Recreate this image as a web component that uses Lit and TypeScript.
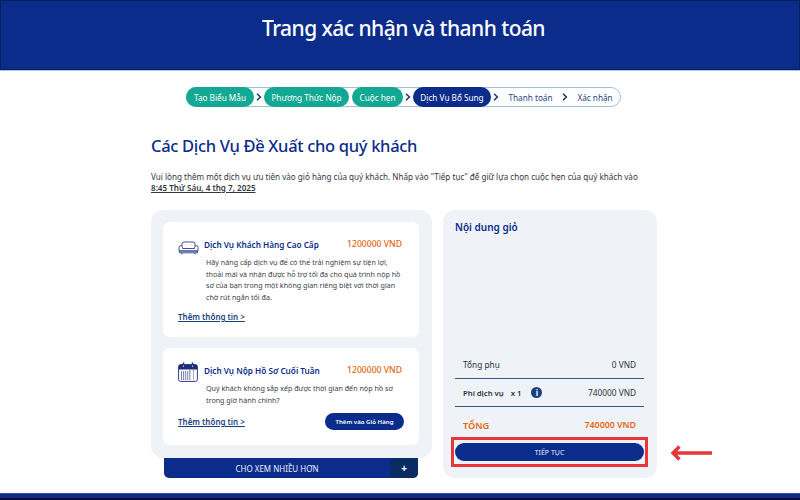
import { LitElement, html, css } from "lit";
import { customElement } from "lit/decorators.js";

const sofa = html`<svg class="sofa" width="21" height="14" viewBox="0 0 21 14" fill="none" stroke="#2b3c8f" stroke-width=".9">
  <path d="M4 5V3Q4 1 6 1H15Q17 1 17 3V5"/>
  <path d="M1 10V6.5Q1 4.7 2.7 4.7T4.5 6.5V7.5H16.5V6.5Q16.5 4.7 18.3 4.7T20 6.5V10Z" fill="#fff"/>
  <path d="M1.5 10H19.5V11.8H1.5Z"/>
  <path d="M4 11.8V13.4M17 11.8V13.4"/>
  <path d="M7.5 4H8.5M12.5 4H13.5" stroke="#d98a94"/>
</svg>`;

const calendar = html`<svg class="cal" width="20" height="20" viewBox="0 0 20 20" fill="none">
  <rect x=".6" y="2.6" width="18.8" height="16.8" rx="2" fill="#fff" stroke="#2b3c8f" stroke-width="1"/>
  <path d="M.6 7.5V4.6Q.6 2.6 2.6 2.6H17.4Q19.4 2.6 19.4 4.6V7.5Z" fill="#1c2f7c"/>
  <path d="M5.5 .6V4.4M14.5 .6V4.4" stroke="#1c2f7c" stroke-width="1.5"/>
  <path d="M5.5 3.6V4.8M14.5 3.6V4.8" stroke="#fff" stroke-width=".9"/>
  <path d="M3.5 9V18M5.6 9V18M7.7 9V18M9.8 9V18M11.9 9V18" stroke="#66739f" stroke-width=".9"/>
  <path d="M15.5 9V18" stroke="#66739f" stroke-width=".6"/>
  <path d="M11 8.7H12.4M14.8 8.7H16.2" stroke="#d9534f" stroke-width=".9"/>
</svg>`;

@customElement("app-root")
export class AppRoot extends LitElement {
  static styles = css`
    :host {
      display: flex;
      flex-direction: column;
      width: 800px;
      height: 500px;
      overflow: hidden;
      position: relative;
      background: #fff;
      font-family: "Noto Sans", sans-serif;
      color: #2b2f38;
    }
    * { box-sizing: border-box; }
    .top {
      height: 70px;
      margin-bottom: 1px;
      flex: none;
      background: #0b2c8a;
      border: 1px solid #07205f;
      box-shadow: 0 1px 0 #a9c4ea;
      display: flex;
      justify-content: center;
      padding: 13px 0 0 7px;
      color: #fff;
      font-size: 21px;
      font-weight: 500;
      line-height: 28px;
      letter-spacing: -0.56px;
    }
    .steps-row {
      display: flex;
      padding: 16px 0 0 186px;
      height: 47px;
      flex: none;
    }
    .steps {
      width: 435px;
      height: 20px;
      border: 1px solid #9fc0d8;
      border-radius: 10px;
      display: flex;
      align-items: center;
      font-size: 8.2px;
    }
    .pill {
      height: 20px;
      border-radius: 10px;
      display: flex;
      align-items: center;
      justify-content: center;
      color: #fff;
      background: #12a893;
      flex: none;
    }
    .p1 { width: 68px; margin-left: -1px; }
    .p2 { width: 85px; }
    .p3 { width: 51px; margin-left: 3px; }
    .p4 { width: 78px; background: #0b2c8a; }
    .plain { color: #23457e; flex: none; text-align: center; }
    .t1 { width: 59px; }
    .t2 { width: 50px; }
    .chev { width: 10px; flex: none; display: flex; justify-content: center; }
    .main {
      width: 506px;
      margin-left: 151px;
      flex: 1;
      display: flex;
      flex-direction: column;
    }
    h1 {
      margin: 16px 0 0;
      font-size: 16.5px;
      line-height: 24px;
      font-weight: 500;
      color: #0b2c8a;
      letter-spacing: -0.31px;
    }
    .desc {
      margin: 13px 0 0;
      font-size: 8.1px;
      line-height: 11px;
      width: 506px;
      color: #33373f;
    }
    .desc b {
      font-weight: 600;
      text-decoration: underline;
      white-space: nowrap;
    }
    .cols {
      margin-top: 17px;
      display: flex;
      gap: 11px;
      align-items: flex-start;
    }
    .left { width: 281px; flex: none; display: flex; flex-direction: column; }
    .panel {
      width: 281px;
      height: 248px;
      background: #eff3f7;
      border-radius: 12px;
      padding: 12px 13px 12px 12px;
      display: flex;
      flex-direction: column;
      gap: 11px;
    }
    .card {
      background: #fff;
      border-radius: 7px;
      padding: 15px 15px 0;
      display: flex;
      flex-direction: column;
    }
    .c1 { height: 115px; }
    .c2 { height: 97px; }
    .head { display: flex; align-items: center; height: 14px; }
    .ico { width: 26px; flex: none; display: flex; height: 14px; align-items: center; }
    .sofa { margin-top: 7px; }
    .cal { margin-top: 4px; }
    .name { flex: 1; color: #0b2c8a; font-size: 8.2px; font-weight: 600; }
    .price { color: #e4640f; font-size: 8.6px; font-weight: 500; padding-right: 2px; }
    .txt {
      margin: 6px 0 0 28px;
      font-size: 7.15px;
      line-height: 11.6px;
      color: #3c4048;
      width: 197px;
    }
    .foot {
      margin-top: 7px;
      display: flex;
      align-items: center;
      justify-content: space-between;
      min-height: 12px;
    }
    .link {
      color: #17427f;
      font-size: 8px;
      font-weight: 600;
      text-decoration: underline;
    }
    .add {
      width: 79px;
      height: 17px;
      border-radius: 9px;
      background: #0b2c8a;
      color: #fff;
      font-size: 6.1px;
      font-weight: 600;
      display: flex;
      align-items: center;
      justify-content: center;
    }
    .more {
      width: 254px;
      height: 20px;
      margin-left: 13px;
      background: #0b2c8a;
      border-radius: 0 0 5px 5px;
      display: flex;
      overflow: hidden;
      color: #e8eefb;
      font-size: 8px;
    }
    .more span { flex: 1; display: flex; align-items: center; justify-content: center; }
    .more i {
      width: 28px;
      background: #0a2b63;
      font-style: normal;
      font-weight: 700;
      font-size: 10px;
      color: #fff;
      display: flex;
      align-items: center;
      justify-content: center;
    }
    .cart {
      width: 214px;
      height: 268px;
      background: #eff3f7;
      border-radius: 12px;
      padding: 10px 13px 0 12px;
      display: flex;
      flex-direction: column;
    }
    .cart h2 {
      margin: 0;
      font-size: 10px;
      line-height: 15px;
      font-weight: 600;
      color: #0b2c8a;
    }
    .spacer { flex: 1; }
    .line {
      height: 28px;
      display: flex;
      align-items: center;
      justify-content: space-between;
      border-bottom: 1px solid #36577f;
      padding: 0 8px;
      font-size: 8.3px;
      color: #2b3340;
    }
    .line .l { display: flex; align-items: center; }
    .fee .l { font-weight: 600; font-size: 7.7px; }
    .x { margin-left: 7px; }
    .info {
      width: 11px;
      height: 11px;
      margin-left: 10px;
      border-radius: 50%;
      background: #17427f;
      color: #fff;
      font-size: 8px;
      font-weight: 700;
      display: flex;
      align-items: center;
      justify-content: center;
    }
    .total {
      height: 36px;
      display: flex;
      align-items: center;
      justify-content: space-between;
      padding: 0 8px;
      color: #e4640f;
      font-size: 9.2px;
      font-weight: 600;
    }
    .total .amt { font-size: 8.8px; }
    .go {
      height: 18px;
      border-radius: 9px;
      background: #0b2c8a;
      color: #e8eefb;
      font-size: 7px;
      display: flex;
      align-items: center;
      justify-content: center;
      margin-bottom: 17px;
    }
    .bottom {
      position: absolute;
      left: 0;
      right: 0;
      bottom: 0;
      height: 7px;
      background: #0b2c8a;
      border-top: 1px solid #2d4fa8;
      border-bottom: 2px solid #050f33;
    }
    .mark {
      position: absolute;
      left: 451px;
      top: 437px;
      width: 197px;
      height: 30px;
      border: 3px solid #e8363a;
    }
    .arrow { position: absolute; left: 670px; top: 445px; }
  `;

  private chev() {
    return html`<span class="chev"><svg width="6" height="8" viewBox="0 0 6 8" fill="none" stroke="#15356f" stroke-width="1.5"><path d="M1 .8 4.4 4 1 7.2"/></svg></span>`;
  }

  render() {
    return html`
      <div class="top">Trang xác nhận và thanh toán</div>
      <div class="steps-row">
        <div class="steps">
          <div class="pill p1">Tạo Biểu Mẫu</div>
          ${this.chev()}
          <div class="pill p2">Phương Thức Nộp</div>
          <div class="pill p3">Cuộc hẹn</div>
          ${this.chev()}
          <div class="pill p4">Dịch Vụ Bổ Sung</div>
          ${this.chev()}
          <span class="plain t1">Thanh toán</span>
          ${this.chev()}
          <span class="plain t2">Xác nhận</span>
        </div>
      </div>
      <div class="main">
        <h1>Các Dịch Vụ Đề Xuất cho quý khách</h1>
        <p class="desc">Vui lòng thêm một dịch vụ ưu tiên vào giỏ hàng của quý khách. Nhấp vào "Tiếp tục" để giữ lựa chọn cuộc hẹn của quý khách vào <b>8:45 Thứ Sáu, 4 thg 7, 2025</b></p>
        <div class="cols">
          <div class="left">
            <div class="panel">
              <div class="card c1">
                <div class="head">
                  <span class="ico">${sofa}</span>
                  <span class="name">Dịch Vụ Khách Hàng Cao Cấp</span>
                  <span class="price">1200000 VND</span>
                </div>
                <div class="txt">Hãy nâng cấp dịch vụ để có thể trải nghiệm sự tiện lợi, thoải mái và nhận được hỗ trợ tối đa cho quá trình nộp hồ sơ của bạn trong một không gian riêng biệt với thời gian chờ rút ngắn tối đa.</div>
                <div class="foot"><span class="link">Thêm thông tin &gt;</span></div>
              </div>
              <div class="card c2">
                <div class="head">
                  <span class="ico">${calendar}</span>
                  <span class="name">Dịch Vụ Nộp Hồ Sơ Cuối Tuần</span>
                  <span class="price">1200000 VND</span>
                </div>
                <div class="txt">Quý khách không sắp xếp được thời gian đến nộp hồ sơ trong giờ hành chính?</div>
                <div class="foot">
                  <span class="link">Thêm thông tin &gt;</span>
                  <span class="add">Thêm vào Giỏ Hàng</span>
                </div>
              </div>
            </div>
            <div class="more"><span>CHO XEM NHIỀU HƠN</span><i>+</i></div>
          </div>
          <div class="cart">
            <h2>Nội dung giỏ</h2>
            <div class="spacer"></div>
            <div class="line"><span class="l">Tổng phụ</span><span>0 VND</span></div>
            <div class="line fee">
              <span class="l">Phí dịch vụ<span class="x">x 1</span><span class="info">i</span></span>
              <span>740000 VND</span>
            </div>
            <div class="total"><span>TỔNG</span><span class="amt">740000 VND</span></div>
            <div class="go">TIẾP TỤC</div>
          </div>
        </div>
      </div>
      <div class="bottom"></div>
      <div class="mark"></div>
      <svg class="arrow" width="43" height="16" viewBox="0 0 43 16" fill="none" stroke="#e8363a" stroke-width="3.4"><path d="M3 8H42M9.5 1.5 3 8 9.5 14.5"/></svg>
    `;
  }
}
